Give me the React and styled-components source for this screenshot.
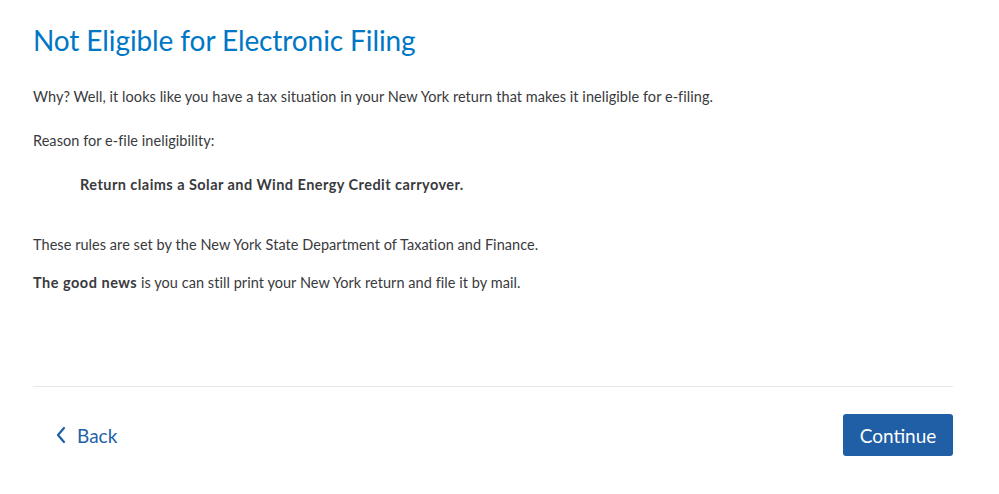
import React from "react";
import styled, { createGlobalStyle } from "styled-components";

const Global = createGlobalStyle`
  body {
    margin: 0;
    background: #fff;
    font-family: Lato, "Open Sans", sans-serif;
    color: #393a3d;
  }
`;

const Page = styled.div`
  width: 999px;
  height: 494px;
  padding: 0 46px 0 33px;
  box-sizing: border-box;
  display: flex;
  flex-direction: column;
`;

const Title = styled.h1`
  margin: 23px 0 0;
  font-size: 28px;
  font-weight: 400;
  color: #0077c5;
  line-height: 34px;
  letter-spacing: -0.1px;
`;

const Text = styled.p`
  margin: ${(p) => p.mt || 0}px 0 0;
  padding-left: ${(p) => (p.indent ? 47 : 0)}px;
  font-size: 14.5px;
  line-height: 20px;
  font-weight: ${(p) => (p.bold ? 700 : 400)};
  letter-spacing: ${(p) => (p.bold ? 0.45 : 0.05)}px;
`;

const Strong = styled.b`
  font-weight: 700;
  letter-spacing: 0.5px;
`;

const Divider = styled.hr`
  margin: auto 0 0;
  border: 0;
  border-top: 1px solid #e8e8e8;
  margin-bottom: 27px;
`;

const Footer = styled.div`
  display: flex;
  align-items: center;
  justify-content: space-between;
  margin-bottom: 38px;
`;

const BackLink = styled.button`
  display: flex;
  align-items: center;
  gap: 10px;
  margin-left: 22px;
  background: none;
  border: 0;
  padding: 0;
  font-family: inherit;
  font-size: 19px;
  color: #1f5fa6;
  cursor: pointer;
`;

const Continue = styled.button`
  width: 110px;
  height: 42px;
  border: 0;
  border-radius: 3px;
  background: #205ea6;
  color: #fff;
  font-family: inherit;
  font-size: 19px;
  cursor: pointer;
`;

export default function App() {
  return (
    <>
      <Global />
      <Page>
        <Title>Not Eligible for Electronic Filing</Title>
        <Text mt={30}>
          Why? Well, it looks like you have a tax situation in your New York return that makes it ineligible for e-filing.
        </Text>
        <Text mt={24}>Reason for e-file ineligibility:</Text>
        <Text mt={24} bold indent>
          Return claims a Solar and Wind Energy Credit carryover.
        </Text>
        <Text mt={40}>These rules are set by the New York State Department of Taxation and Finance.</Text>
        <Text mt={18}>
          <Strong>The good news</Strong> is you can still print your New York return and file it by mail.
        </Text>
        <Divider />
        <Footer>
          <BackLink>
            <svg width="12" height="18" viewBox="0 0 12 18">
              <path d="M9 2 L3 9 L9 16" fill="none" stroke="#1f5fa6" strokeWidth="2.2" strokeLinecap="round" strokeLinejoin="round" />
            </svg>
            Back
          </BackLink>
          <Continue>Continue</Continue>
        </Footer>
      </Page>
    </>
  );
}
